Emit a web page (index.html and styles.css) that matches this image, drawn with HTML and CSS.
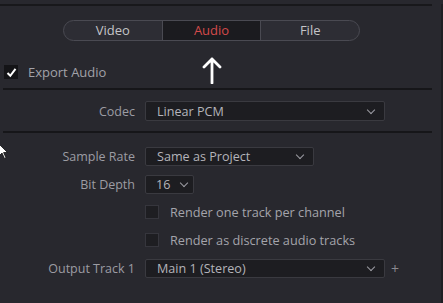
FILE: index.html
```html
<!DOCTYPE html>
<html lang="en">
<head>
    <meta charset="UTF-8">
    <meta name="viewport" content="width=device-width, initial-scale=1.0">
    <title>Audio Export</title>
    <link rel="stylesheet" href="styles.css">
</head>
<body>
    <div class="panel">
        <div class="tabs">
            <div class="tab">Video</div>
            <div class="tab active">Audio</div>
            <div class="tab">File</div>
        </div>
        <svg class="arrow" width="20" height="28" viewBox="0 0 20 28">
            <path d="M10 27 V3 M2 11 L10 3 L18 11" fill="none" stroke="#fff" stroke-width="2.8" stroke-linecap="round" stroke-linejoin="round"/>
        </svg>

        <div class="export">
            <span class="check checked">
                <svg width="11" height="11" viewBox="0 0 11 11"><path d="M1.5 6 L4.3 8.8 L9.5 1.8" fill="none" stroke="#fff" stroke-width="2"/></svg>
            </span>
            <span class="export-label">Export Audio</span>
        </div>

        <div class="divider first"></div>

        <div class="row codec">
            <label>Codec</label>
            <div class="select wide"><span>Linear PCM</span><i class="chev"></i></div>
        </div>

        <div class="divider"></div>

        <div class="group">
            <div class="row">
                <label>Sample Rate</label>
                <div class="select mid"><span>Same as Project</span><i class="chev"></i></div>
            </div>
            <div class="row">
                <label>Bit Depth</label>
                <div class="select small"><span>16</span><i class="chev"></i></div>
            </div>
            <div class="row opt">
                <label></label>
                <span class="check"></span>
                <span class="opt-label">Render one track per channel</span>
            </div>
            <div class="row opt">
                <label></label>
                <span class="check"></span>
                <span class="opt-label">Render as discrete audio tracks</span>
            </div>
            <div class="row">
                <label>Output Track 1</label>
                <div class="select wide"><span>Main 1 (Stereo)</span><i class="chev"></i></div>
                <span class="plus">+</span>
            </div>
        </div>

        <svg class="cursor" width="9" height="16" viewBox="0 0 9 16">
            <path d="M0 0 L0 12 L3 9 L5.5 14.5 L7 13.8 L4.6 8.5 L8.5 8.5 Z" fill="#fff" stroke="#111" stroke-width="0.8"/>
        </svg>
    </div>
</body>
</html>
```

FILE: styles.css
```css
body {
    margin: 0;
    background-color: #28282e;
    font-family: "Open Sans", "Noto Sans", sans-serif;
    font-size: 12.5px;
    color: #9c9ca3;
}
.panel {
    position: relative;
    width: 441px;
    height: 303px;
    border-right: 2px solid #1e1e22;
    box-sizing: content-box;
}
.panel::before {
    content: "";
    display: block;
    width: 432px;
    height: 2px;
    margin-top: 4px;
    background: #18181b;
}
.tabs {
    display: flex;
    width: 297px;
    height: 21px;
    margin: 14px 0 0 63px;
    border: 1px solid #4a4a52;
    border-radius: 11px;
    box-sizing: border-box;
    overflow: hidden;
    background: #2d2d34;
}
.tab {
    flex: 1;
    text-align: center;
    line-height: 19px;
    font-size: 13px;
    color: #c4c4c8;
}
.tab.active {
    background: #1b1b1f;
    color: #d44a4a;
    border-left: 1px solid #4a4a52;
    border-right: 1px solid #4a4a52;
}
.arrow {
    position: absolute;
    left: 202px;
    top: 52px;
}
.export {
    display: flex;
    align-items: center;
    height: 14px;
    margin: 24px 0 0 4px;
}
.check {
    display: inline-flex;
    align-items: center;
    justify-content: center;
    width: 14px;
    height: 14px;
    box-sizing: border-box;
    background: #1e1e22;
    border: 1px solid #36363d;
}
.check.checked {
    background: #141417;
    border-color: #141417;
}
.export-label {
    margin-left: 10px;
    font-size: 13px;
    color: #a2a2a9;
}
.divider {
    width: 429px;
    height: 2px;
    margin-left: 3px;
    background: #161619;
}
.divider.first {
    margin-top: 9px;
}
.row {
    display: flex;
    align-items: center;
    height: 20px;
}
.row label {
    width: 135px;
    text-align: right;
    margin-right: 10px;
    flex: none;
}
.codec {
    margin: 11px 0 10px;
}
.group {
    display: flex;
    flex-direction: column;
    gap: 8px;
    margin-top: 13px;
}
.select {
    display: flex;
    align-items: center;
    justify-content: space-between;
    height: 19px;
    box-sizing: border-box;
    padding: 0 10px 0 11px;
    background: #1d1d21;
    border: 1px solid #3a3a40;
    border-radius: 2px;
    color: #b4b4ba;
    font-size: 12.6px;
}
.codec .select {
    height: 20px;
}
.select.wide { width: 240px; }
.select.mid { width: 169px; }
.select.small { width: 49px; padding: 0 6px 0 10px; }
.chev {
    width: 5px;
    height: 5px;
    border-right: 1.5px solid #9c9ca3;
    border-bottom: 1.5px solid #9c9ca3;
    transform: rotate(45deg);
    margin-top: -3px;
}
.opt {
    height: 20px;
}
.opt-label {
    margin-left: 11px;
    font-size: 12.7px;
    color: #a4a4ab;
}
.plus {
    margin-left: 6px;
    font-size: 14px;
    color: #8a8a90;
}
.cursor {
    position: absolute;
    left: -1px;
    top: 140px;
}
```
